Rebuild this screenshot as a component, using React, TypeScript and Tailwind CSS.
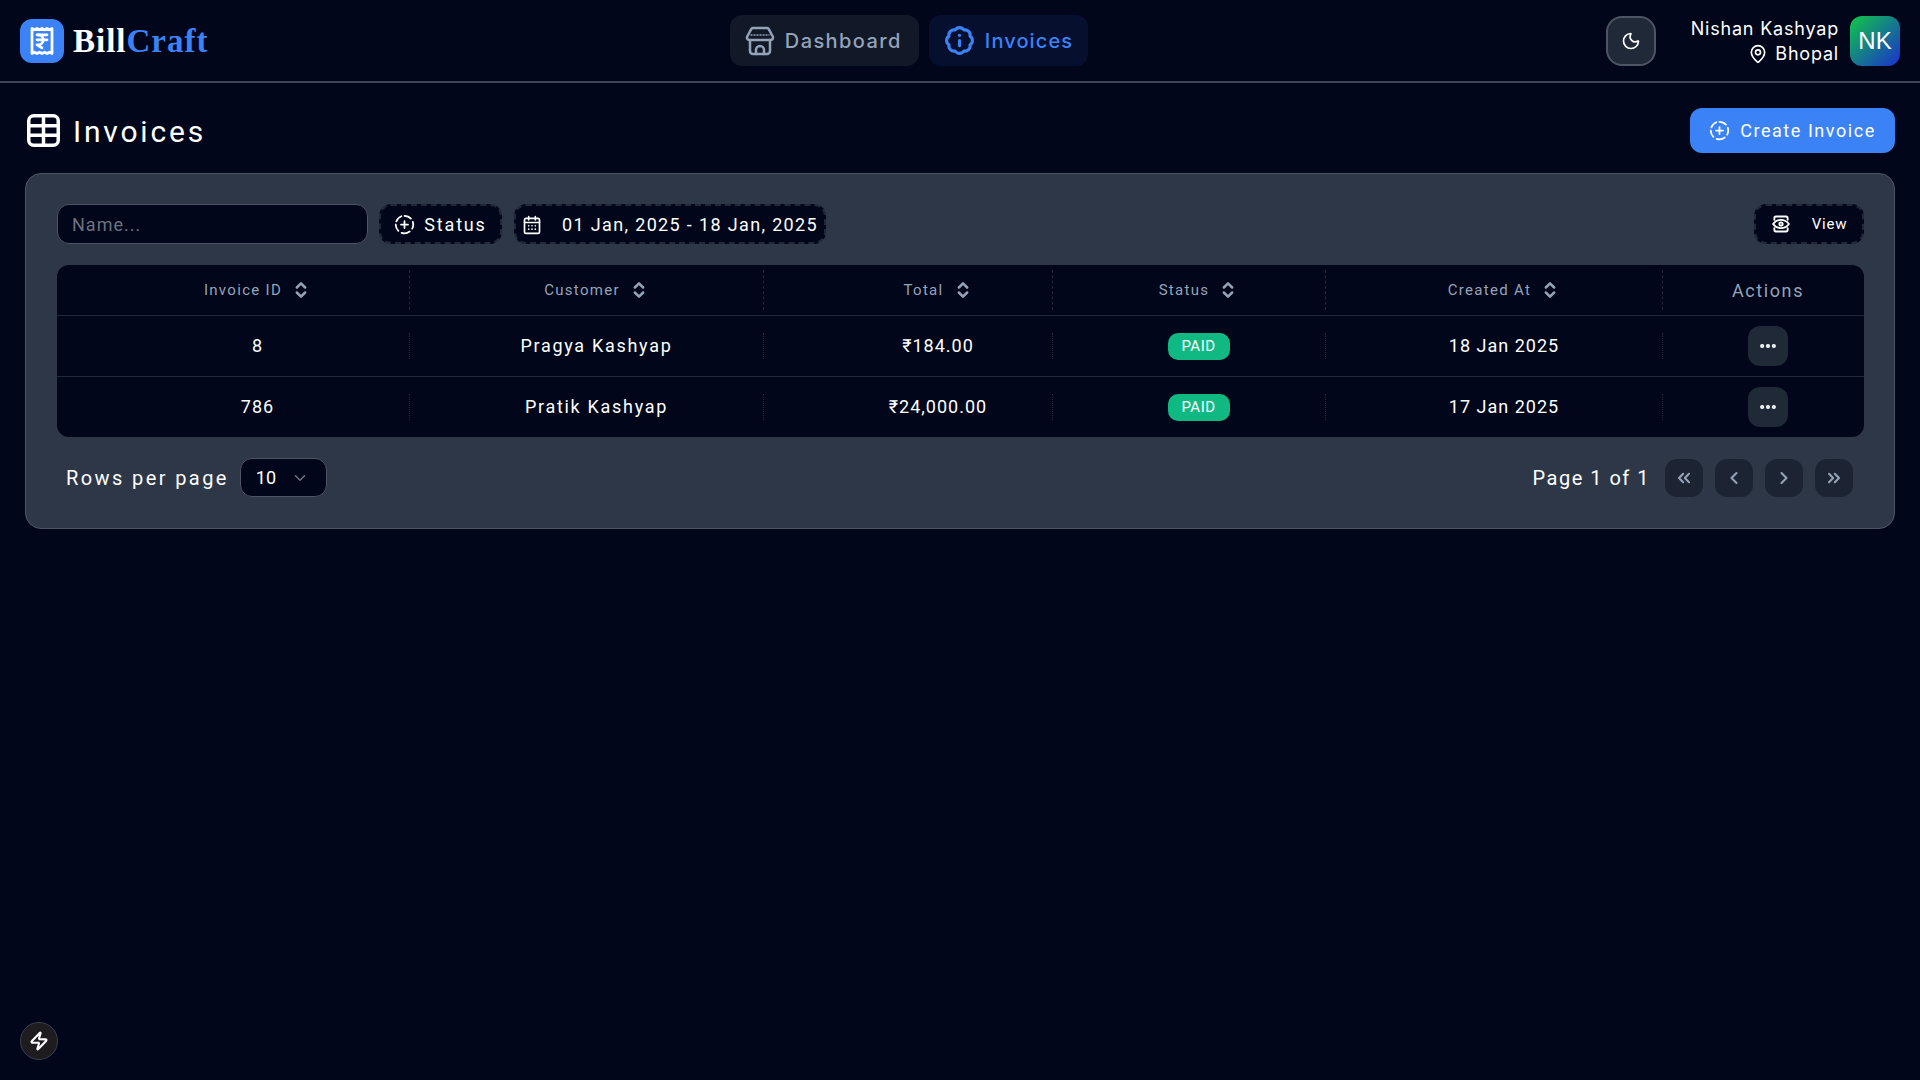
import { BadgeInfo, ChevronDown, ChevronLeft, ChevronRight, ChevronsLeft, ChevronsRight, ChevronsUpDown, Ellipsis, MapPin, Moon, ReceiptIndianRupee, Zap } from 'lucide-react'

const techFont = { fontFamily: 'Roboto, sans-serif' }

const rows = [
  { id: '8', customer: 'Pragya Kashyap', total: '₹184.00', status: 'PAID', created: '18 Jan 2025' },
  { id: '786', customer: 'Pratik Kashyap', total: '₹24,000.00', status: 'PAID', created: '17 Jan 2025' },
]

const headers = ['Invoice ID', 'Customer', 'Total', 'Status', 'Created At']
// cell paddings that push each column's content off centre, as in the reference
const colPad = ['pl-[49px]', 'pl-[20px]', 'pl-[60px]', 'pl-[19px]', 'pl-[20px]', 'pl-[9px]']
const colSep = 'border-r border-dashed border-[#1f2937]'
const cellBase = 'flex h-[26px] items-center justify-center border-r border-dotted border-[#1f2937]'

function StoreIcon() {
  return (
    <svg viewBox="0 0 30 30" className="h-[30px] w-[30px]" fill="none" stroke="currentColor" strokeWidth="2.500" strokeLinecap="round" strokeLinejoin="round">
      <path d="M8 2h14a2 2 0 0 1 1.800 1.200L28 11a2.500 2.500 0 0 1-2.500 3h-21A2.500 2.500 0 0 1 2 11l4.200-7.800A2 2 0 0 1 8 2Z" />
      <path d="M5.500 9h19" strokeWidth="1.500" strokeDasharray="2 1" strokeLinecap="butt" />
      <path d="M5 14v11a3 3 0 0 0 3 3h14a3 3 0 0 0 3-3V14" />
      <path d="M11 28v-4a4 4 0 0 1 8 0v4" />
    </svg>
  )
}

function DashedPlus({ className }: { className?: string }) {
  return (
    <svg viewBox="0 0 24 24" className={className} fill="none" stroke="currentColor" strokeWidth="2" strokeLinecap="round" strokeLinejoin="round">
      <path d="M12 2a10 10 0 0 1 7.380 3.250" />
      <path d="M21.500 9a10 10 0 0 1 .500 3 10 10 0 0 1-1.200 4.700" />
      <path d="M17.900 20a10 10 0 0 1-9.200 1.500" />
      <path d="M5 19.200A10 10 0 0 1 2 12" />
      <path d="M2.700 8.400A10 10 0 0 1 8.500 2.600" />
      <path d="M8 12h8M12 8v8" />
    </svg>
  )
}

function TableIcon() {
  return (
    <svg viewBox="0 0 33 33" className="h-[33px] w-[33px]" fill="none" stroke="currentColor" strokeWidth="3.500" strokeLinejoin="round">
      <rect x="1.750" y="1.750" width="29.500" height="29.500" rx="5" />
      <path d="M1.750 11.800h29.500M1.750 21.200h29.500M16.500 1.750v29.500" />
    </svg>
  )
}

function ViewIcon() {
  return (
    <svg viewBox="0 0 24 24" className="h-[22px] w-[20px]" fill="none" stroke="currentColor" strokeWidth="2.200" strokeLinecap="round" strokeLinejoin="round">
      <path d="M4 7V5a2 2 0 0 1 2-2h12a2 2 0 0 1 2 2v2" />
      <path d="M4 17v2a2 2 0 0 0 2 2h12a2 2 0 0 0 2-2v-2" />
      <path d="M2.500 12S6 7 12 7s9.500 5 9.500 5-3.500 5-9.500 5-9.500-5-9.500-5Z" />
      <circle cx="12" cy="12" r="2" />
    </svg>
  )
}

function CalendarIcon() {
  return (
    <svg viewBox="0 0 24 24" className="h-[20px] w-[20px]" fill="none" stroke="currentColor" strokeWidth="2" strokeLinecap="round" strokeLinejoin="round">
      <rect x="3" y="4" width="18" height="18" rx="2" />
      <path d="M8 2v4M16 2v4M3 9h18" />
      <path d="M8 13h.01M12 13h.01M16 13h.01M8 17h.01M12 17h.01M16 17h.01" />
    </svg>
  )
}

export default function App() {
  return (
    <div className="relative min-h-screen bg-[#01061a] text-white" style={techFont}>
      {/* Top bar */}
      <header className="flex h-[83px] items-center justify-between border-b-2 border-[#3f4458] px-5 pt-px">
        <div className="flex w-[192px] items-center gap-[9px]">
          <div className="flex h-11 w-11 shrink-0 items-center justify-center rounded-xl bg-[#3b82f6]">
            <ReceiptIndianRupee size={30} strokeWidth={2.200} />
          </div>
          <div className="pt-px font-['Liberation_Serif',serif] text-[33px] font-bold tracking-[1px]">
            Bill<span className="text-[#3b82f6]">Craft</span>
          </div>
        </div>

        <nav className="mb-px flex items-center gap-[10px] font-['Inter',sans-serif] text-[20px] font-medium">
          <a className="flex h-[51px] w-[189px] items-center gap-[10px] rounded-xl bg-[#111827] pl-[15px] tracking-[1.400px] text-[#94a3b8]">
            <StoreIcon />
            Dashboard
          </a>
          <a className="flex h-[51px] w-[159px] items-center gap-[10px] rounded-xl bg-[#06102e] pl-[15px] tracking-[1.100px] text-[#3b82f6]">
            <BadgeInfo size={31} strokeWidth={2.400} />
            Invoices
          </a>
        </nav>

        <div className="flex items-center">
          <button className="flex h-[50px] w-[50px] items-center justify-center rounded-2xl border-2 border-[#4b5563] bg-[#1f2937]">
            <Moon size={20} />
          </button>
          <div className="ml-[35px] text-right font-['Inter',sans-serif] text-[18px] leading-[25px] tracking-[0.8px]">
            <div>Nishan Kashyap</div>
            <div className="flex items-center justify-end gap-[7px]">
              <MapPin size={20} />
              Bhopal
            </div>
          </div>
          <div className="ml-[11px] flex h-[50px] w-[50px] items-center justify-center rounded-xl bg-linear-to-br/srgb from-[#10c846] to-[#1a2fd0] font-['Liberation_Sans',sans-serif] text-[24px]">
            NK
          </div>
        </div>
      </header>

      <main className="px-[25px] pt-[25px]">
        <div className="mb-5 flex h-[45px] items-center justify-between">
          <div className="flex items-center gap-[13px] pl-[2px]">
            <TableIcon />
            <h1 className="pt-[2px] text-[30px] tracking-[2.800px]">Invoices</h1>
          </div>
          <button className="flex h-[45px] w-[205px] items-center justify-center gap-[10px] rounded-xl bg-[#3b82f6] text-[18px] tracking-[1.550px]">
            <DashedPlus className="h-[21px] w-[21px]" />
            Create Invoice
          </button>
        </div>

        <section className="rounded-2xl border border-[#4b5563] bg-[#2d3748] pb-[31px] pl-[31px] pr-[30px] pt-[30px]">
          {/* Filters */}
          <div className="flex h-[40px] items-stretch">
            <div className="flex w-[311px] items-center rounded-xl border border-[#4b5563] bg-[#01061a] px-[14px] pt-px text-[18px] tracking-[1px] text-[#6b7280]">
              Name...
            </div>
            <button className="ml-[11px] flex w-[123px] items-center justify-center gap-[9px] rounded-xl border-2 border-dashed border-[#1f2937] bg-[#01061a] pt-px text-[18px] tracking-[1.800px]">
              <DashedPlus className="h-[21px] w-[21px]" />
              Status
            </button>
            <button className="ml-[12px] flex w-[312px] items-center gap-[20px] rounded-xl border-2 border-dashed border-[#1f2937] bg-[#01061a] pl-[6px] pt-px text-[18px] tracking-[1.350px]">
              <CalendarIcon />
              01 Jan, 2025 - 18 Jan, 2025
            </button>
            <button className="ml-auto flex w-[110px] items-center justify-center gap-[21px] rounded-xl border-2 border-dashed border-[#1f2937] bg-[#01061a] text-[15px] tracking-[0.8px]">
              <ViewIcon />
              View
            </button>
          </div>

          {/* Table */}
          <div className="mt-[21px] overflow-hidden rounded-xl bg-[#01061a]">
            <table className="w-full table-fixed border-collapse">
              <colgroup>
                <col className="w-[353px]" />
                <col className="w-[354px]" />
                <col className="w-[289px]" />
                <col className="w-[273px]" />
                <col className="w-[337px]" />
                <col />
              </colgroup>
              <thead>
                <tr className="h-[50px] border-b border-[#1f2937]">
                  {headers.map((h, i) => (
                    <th key={h} className="p-0 font-normal">
                      <div className={`flex h-10 items-center justify-center gap-[9px] text-[15px] tracking-[1.300px] text-[#94a3b8] ${colSep} ${colPad[i]}`}>
                        {h}
                        <ChevronsUpDown size={20} strokeWidth={3} />
                      </div>
                    </th>
                  ))}
                  <th className="p-0 font-normal">
                    <div className={`pt-[2px] text-center text-[18px] tracking-[1.600px] text-[#94a3b8] ${colPad[5]}`}>Actions</div>
                  </th>
                </tr>
              </thead>
              <tbody>
                {rows.map((row, rowIndex) => (
                  <tr key={row.id} className={`h-[61px] text-[18px] tracking-[1px] ${rowIndex === 0 ? 'border-b border-[#1f2937]' : ''}`}>
                    <td className="p-0">
                      <div className={`${cellBase} ${colPad[0]}`}>{row.id}</div>
                    </td>
                    <td className="p-0">
                      <div className={`${cellBase} tracking-[1.700px] ${colPad[1]}`}>{row.customer}</div>
                    </td>
                    <td className="p-0">
                      <div className={`${cellBase} ${colPad[2]}`}>{row.total}</div>
                    </td>
                    <td className="p-0">
                      <div className={`${cellBase} ${colPad[3]}`}>
                        <span className="mt-px flex h-[27px] w-[62px] items-center justify-center rounded-[10px] bg-[#10b981] text-[15px] tracking-[0.5px]">{row.status}</span>
                      </div>
                    </td>
                    <td className="p-0">
                      <div className={`${cellBase} ${colPad[4]}`}>{row.created}</div>
                    </td>
                    <td className="p-0">
                      <div className={`flex items-center justify-center ${colPad[5]}`}>
                        <button className="flex h-10 w-10 items-center justify-center rounded-xl bg-[#1f2937]">
                          <Ellipsis size={20} strokeWidth={3} />
                        </button>
                      </div>
                    </td>
                  </tr>
                ))}
              </tbody>
            </table>
          </div>

          {/* Pagination */}
          <div className="mt-[21px] flex h-[39px] items-center justify-between pl-[9px] pr-[11px]">
            <div className="flex items-center gap-[11px]">
              <span className="text-[20px] tracking-[2.400px]">Rows per page</span>
              <div className="flex h-[39px] w-[87px] items-center justify-between rounded-xl border border-[#4b5563] bg-[#01061a] pl-[15px] pr-[17px] text-[18px]">
                10
                <ChevronDown size={18} className="text-[#6b7280]" />
              </div>
            </div>
            <div className="flex items-center">
              <span className="mr-[15px] text-[20px] tracking-[1.500px]">Page 1 of 1</span>
              <div className="flex gap-[12px] text-[#94a3b8]">
                {[ChevronsLeft, ChevronLeft, ChevronRight, ChevronsRight].map((Icon, i) => (
                  <button key={i} className="flex h-[38px] w-[38px] items-center justify-center rounded-xl bg-[#1c2434]">
                    <Icon size={20} strokeWidth={2.500} />
                  </button>
                ))}
              </div>
            </div>
          </div>
        </section>
      </main>

      {/* Floating dev indicator */}
      <button className="absolute bottom-[20px] left-[20px] flex h-[38px] w-[38px] items-center justify-center rounded-full border border-[#374151] bg-[#1e1c1e]">
        <Zap size={20} strokeWidth={2.500} />
      </button>
    </div>
  )
}
